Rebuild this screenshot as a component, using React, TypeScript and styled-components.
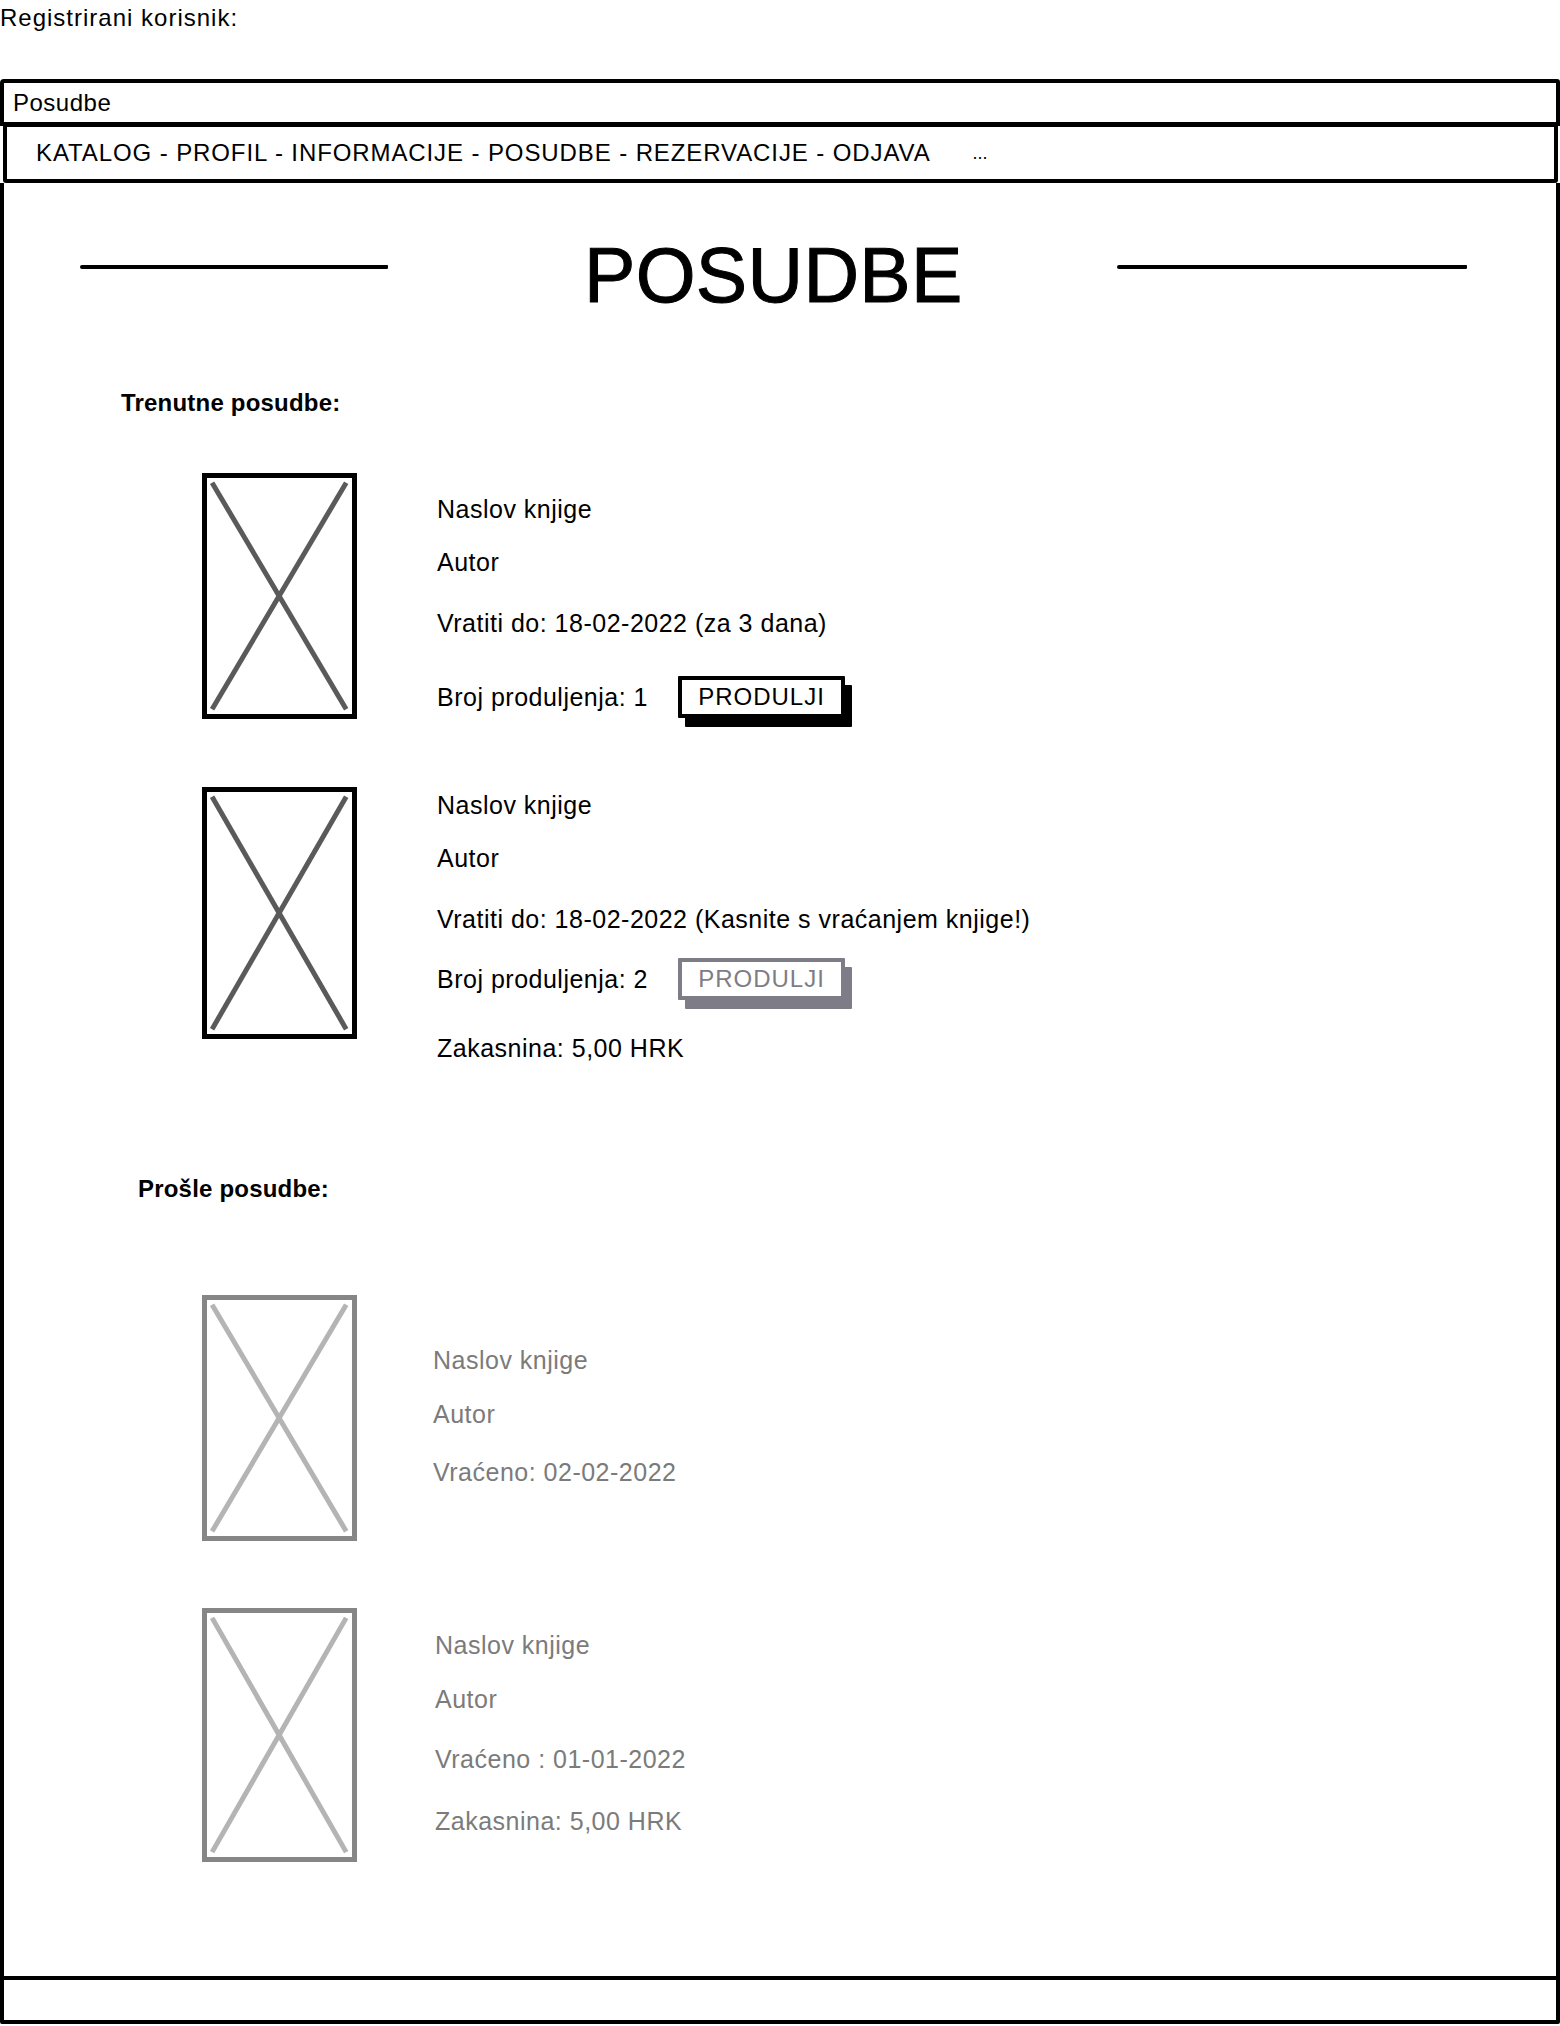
import styled, { createGlobalStyle } from 'styled-components'

const GlobalStyle = createGlobalStyle`
  html,
  body {
    margin: 0;
    padding: 0;
    background: #ffffff;
  }
  body {
    font-family: 'Liberation Sans', Arial, sans-serif;
    color: #000000;
  }
  * {
    box-sizing: border-box;
  }
`

type Line = { text: string; top: number }

type Loan = {
  top: number
  coverHeight: number
  textOffset: number
  textPad: number
  past?: boolean
  lines: Line[]
  action?: { label: string; top: number; disabled?: boolean }
  after?: Line[]
}

const currentLoans: Loan[] = [
  {
    top: 56,
    coverHeight: 246,
    textOffset: 80,
    textPad: 21,
    lines: [
      { text: 'Naslov knjige', top: 0 },
      { text: 'Autor', top: 23 },
      { text: 'Vratiti do: 18-02-2022 (za 3 dana)', top: 31 }
    ],
    action: { label: 'Broj produljenja: 1', top: 38 }
  },
  {
    top: 68,
    coverHeight: 252,
    textOffset: 80,
    textPad: 3,
    lines: [
      { text: 'Naslov knjige', top: 0 },
      { text: 'Autor', top: 23 },
      { text: 'Vratiti do: 18-02-2022 (Kasnite s vraćanjem knjige!)', top: 31 }
    ],
    action: { label: 'Broj produljenja: 2', top: 24, disabled: true },
    after: [{ text: 'Zakasnina: 5,00 HRK', top: 33 }]
  }
]

const pastLoans: Loan[] = [
  {
    top: 92,
    coverHeight: 246,
    textOffset: 76,
    textPad: 50,
    past: true,
    lines: [
      { text: 'Naslov knjige', top: 0 },
      { text: 'Autor', top: 24 },
      { text: 'Vraćeno: 02-02-2022', top: 28 }
    ]
  },
  {
    top: 67,
    coverHeight: 254,
    textOffset: 78,
    textPad: 22,
    past: true,
    lines: [
      { text: 'Naslov knjige', top: 0 },
      { text: 'Autor', top: 24 },
      { text: 'Vraćeno : 01-01-2022', top: 30 },
      { text: 'Zakasnina: 5,00 HRK', top: 32 }
    ]
  }
]

function CoverPlaceholder({ height, past }: { height: number; past?: boolean }) {
  const stroke = past ? '#b4b4b4' : '#5a5a5a'
  return (
    <Cover $height={height} $past={past}>
      <svg width="100%" height="100%">
        <line x1="3.5%" y1="2%" x2="96%" y2="98%" stroke={stroke} strokeWidth="5" />
        <line x1="96%" y1="2%" x2="3.5%" y2="98%" stroke={stroke} strokeWidth="5" />
      </svg>
    </Cover>
  )
}

function LoanItem({ loan }: { loan: Loan }) {
  return (
    <LoanRow $top={loan.top}>
      <CoverPlaceholder height={loan.coverHeight} past={loan.past} />
      <Details $offset={loan.textOffset} $pad={loan.textPad}>
        {loan.lines.map((l, i) => (
          <InfoLine key={i} $top={l.top} $past={loan.past}>
            {l.text}
          </InfoLine>
        ))}
        {loan.action && (
          <ActionRow $top={loan.action.top}>
            <InfoLine $top={0}>{loan.action.label}</InfoLine>
            <ExtendButton $disabled={loan.action.disabled}>PRODULJI</ExtendButton>
          </ActionRow>
        )}
        {loan.after &&
          loan.after.map((l, i) => (
            <InfoLine key={i} $top={l.top}>
              {l.text}
            </InfoLine>
          ))}
      </Details>
    </LoanRow>
  )
}

export default function App() {
  return (
    <>
      <GlobalStyle />
      <Page>
        <UserLabel>Registrirani korisnik:</UserLabel>
        <WindowTitle>Posudbe</WindowTitle>
        <NavBar>
          <NavLinks>
            KATALOG - PROFIL - INFORMACIJE - POSUDBE - REZERVACIJE - ODJAVA
          </NavLinks>
          <NavMore>...</NavMore>
        </NavBar>
        <Main>
          <TitleRow>
            <TitleLine $offset={76} $width={308} />
            <PageTitle>POSUDBE</PageTitle>
            <TitleLine $offset={154} $width={350} />
          </TitleRow>

          <SectionHeading $top={74} $indent={117}>
            Trenutne posudbe:
          </SectionHeading>
          {currentLoans.map((loan, i) => (
            <LoanItem key={i} loan={loan} />
          ))}

          <SectionHeading $top={111} $indent={134}>
            Prošle posudbe:
          </SectionHeading>
          {pastLoans.map((loan, i) => (
            <LoanItem key={i} loan={loan} />
          ))}
        </Main>
        <Footer />
      </Page>
    </>
  )
}

const Page = styled.div`
  width: 1560px;
  display: flex;
  flex-direction: column;
`

const UserLabel = styled.div`
  height: 79px;
  padding-top: 3px;
  font-size: 24px;
  line-height: 29px;
  letter-spacing: 1px;
`

const WindowTitle = styled.div`
  height: 47px;
  border: 4px solid #000;
  border-radius: 4px 3px 0 0;
  display: flex;
  align-items: center;
  padding-left: 9px;
  font-size: 24px;
  letter-spacing: 0.5px;
`

const NavBar = styled.div`
  height: 60px;
  margin: -3px 2px 0 3px;
  border: 4px solid #000;
  border-radius: 3px;
  display: flex;
  align-items: center;
  padding-left: 29px;
  font-size: 24px;
  letter-spacing: 0.9px;
`

const NavLinks = styled.span``

const NavMore = styled.span`
  margin-left: 42px;
  font-size: 18px;
  letter-spacing: 0;
`

const Main = styled.div`
  height: 1793px;
  border-left: 4px solid #000;
  border-right: 4px solid #000;
  display: flex;
  flex-direction: column;
`

const TitleRow = styled.div`
  display: flex;
  align-items: flex-start;
  margin-top: 54px;
`

const TitleLine = styled.div<{ $offset: number; $width: number }>`
  margin-left: ${(p) => p.$offset}px;
  margin-top: 28px;
  width: ${(p) => p.$width}px;
  height: 4px;
  background: #000;
  border-radius: 3px 1px 2px 3px;
`

const PageTitle = styled.h1`
  margin: 0 0 0 196px;
  font-size: 77px;
  line-height: 77px;
  font-weight: normal;
  letter-spacing: 0.3px;
  -webkit-text-stroke: 1px #000;
`

const SectionHeading = styled.div<{ $top: number; $indent: number }>`
  margin-top: ${(p) => p.$top}px;
  padding-left: ${(p) => p.$indent}px;
  font-size: 24px;
  line-height: 29px;
  font-weight: bold;
  letter-spacing: 0.2px;
`

const LoanRow = styled.div<{ $top: number }>`
  display: flex;
  align-items: flex-start;
  margin-top: ${(p) => p.$top}px;
  padding-left: 198px;
`

const Cover = styled.div<{ $height: number; $past?: boolean }>`
  width: 155px;
  height: ${(p) => p.$height}px;
  flex-shrink: 0;
  border: 5px solid ${(p) => (p.$past ? '#868686' : '#000')};
  background: #fff;

  svg {
    display: block;
  }
`

const Details = styled.div<{ $offset: number; $pad: number }>`
  display: flex;
  flex-direction: column;
  margin-left: ${(p) => p.$offset}px;
  padding-top: ${(p) => p.$pad}px;
`

const InfoLine = styled.div<{ $top: number; $past?: boolean }>`
  margin-top: ${(p) => p.$top}px;
  font-size: 25px;
  line-height: 30px;
  letter-spacing: 0.5px;
  color: ${(p) => (p.$past ? '#7b7b7b' : '#000')};
  white-space: nowrap;
`

const ActionRow = styled.div<{ $top: number }>`
  display: flex;
  align-items: center;
  gap: 30px;
  margin-top: ${(p) => p.$top}px;
`

const ExtendButton = styled.button<{ $disabled?: boolean }>`
  width: 167px;
  height: 42px;
  padding: 0;
  border: 4px solid ${(p) => (p.$disabled ? '#7e7d87' : '#000')};
  border-radius: 1px;
  background: #fff;
  box-shadow: 7px 9px 0 ${(p) => (p.$disabled ? '#7e7d87' : '#000')};
  color: ${(p) => (p.$disabled ? '#7e7d87' : '#000')};
  font-family: 'Liberation Sans', Arial, sans-serif;
  font-size: 24px;
  letter-spacing: 1px;
  cursor: ${(p) => (p.$disabled ? 'default' : 'pointer')};
`

const Footer = styled.div`
  height: 48px;
  border: 4px solid #000;
  border-radius: 0 0 2px 2px;
`
